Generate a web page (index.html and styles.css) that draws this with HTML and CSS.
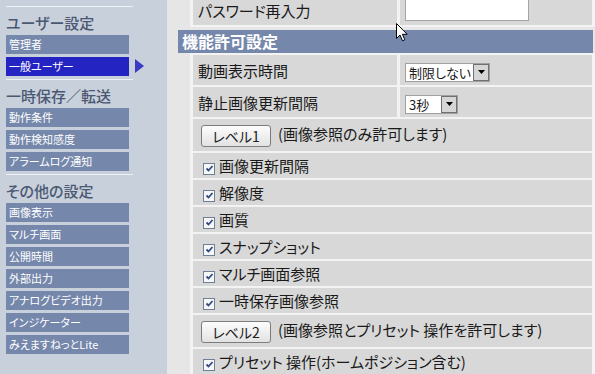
FILE: index.html
```html
<!DOCTYPE html>
<html lang="ja">
<head>
<meta charset="utf-8">
<title>機能許可設定</title>
<link rel="stylesheet" href="styles.css">
</head>
<body>
<div class="page">
  <nav class="sidebar">
    <section class="group">
      <h2 class="group-title">ユーザー設定</h2>
      <ul class="menu">
        <li class="menu-item">管理者</li>
        <li class="menu-item is-current">一般ユーザー</li>
      </ul>
    </section>
    <section class="group">
      <h2 class="group-title">一時保存／転送</h2>
      <ul class="menu">
        <li class="menu-item">動作条件</li>
        <li class="menu-item">動作検知感度</li>
        <li class="menu-item">アラームログ通知</li>
      </ul>
    </section>
    <section class="group">
      <h2 class="group-title">その他の設定</h2>
      <ul class="menu">
        <li class="menu-item">画像表示</li>
        <li class="menu-item">マルチ画面</li>
        <li class="menu-item">公開時間</li>
        <li class="menu-item">外部出力</li>
        <li class="menu-item">アナログビデオ出力</li>
        <li class="menu-item">インジケーター</li>
        <li class="menu-item">みえますねっとLite</li>
      </ul>
    </section>
  </nav>

  <main class="content">
    <table class="form form-top">
      <tr class="row-select">
        <th class="label">パスワード再入力</th>
        <td class="value"><span class="textbox"></span></td>
      </tr>
    </table>

    <h3 class="section-head">機能許可設定</h3>

    <table class="form">
      <tr class="row-select">
        <th class="label">動画表示時間</th>
        <td class="value">
          <span class="select"><span class="select-text select-text-wide">制限しない</span><span class="select-btn"><svg width="7" height="4" viewBox="0 0 7 4"><path d="M0 0H7L3.5 4Z" fill="#000"/></svg></span></span>
        </td>
      </tr>
      <tr class="row-select">
        <th class="label">静止画像更新間隔</th>
        <td class="value">
          <span class="select"><span class="select-text select-text-narrow">3秒</span><span class="select-btn"><svg width="7" height="4" viewBox="0 0 7 4"><path d="M0 0H7L3.5 4Z" fill="#000"/></svg></span></span>
        </td>
      </tr>
      <tr class="row-button">
        <td class="wide" colspan="2"><span class="level-btn">レベル1</span>(画像参照のみ許可します)</td>
      </tr>
      <tr class="row-check">
        <td class="wide check-cell" colspan="2"><span class="check"><svg width="9" height="9" viewBox="0 0 9 9"><path d="M1.5 4.5L3.5 6.5L7.5 2" fill="none" stroke="#2c4a86" stroke-width="1.8"/></svg></span>画像更新間隔</td>
      </tr>
      <tr class="row-check">
        <td class="wide check-cell" colspan="2"><span class="check"><svg width="9" height="9" viewBox="0 0 9 9"><path d="M1.5 4.5L3.5 6.5L7.5 2" fill="none" stroke="#2c4a86" stroke-width="1.8"/></svg></span>解像度</td>
      </tr>
      <tr class="row-check">
        <td class="wide check-cell" colspan="2"><span class="check"><svg width="9" height="9" viewBox="0 0 9 9"><path d="M1.5 4.5L3.5 6.5L7.5 2" fill="none" stroke="#2c4a86" stroke-width="1.8"/></svg></span>画質</td>
      </tr>
      <tr class="row-check">
        <td class="wide check-cell" colspan="2"><span class="check"><svg width="9" height="9" viewBox="0 0 9 9"><path d="M1.5 4.5L3.5 6.5L7.5 2" fill="none" stroke="#2c4a86" stroke-width="1.8"/></svg></span>スナップショット</td>
      </tr>
      <tr class="row-check">
        <td class="wide check-cell" colspan="2"><span class="check"><svg width="9" height="9" viewBox="0 0 9 9"><path d="M1.5 4.5L3.5 6.5L7.5 2" fill="none" stroke="#2c4a86" stroke-width="1.8"/></svg></span>マルチ画面参照</td>
      </tr>
      <tr class="row-check">
        <td class="wide check-cell" colspan="2"><span class="check"><svg width="9" height="9" viewBox="0 0 9 9"><path d="M1.5 4.5L3.5 6.5L7.5 2" fill="none" stroke="#2c4a86" stroke-width="1.8"/></svg></span>一時保存画像参照</td>
      </tr>
      <tr class="row-button">
        <td class="wide" colspan="2"><span class="level-btn">レベル2</span>(画像参照とプリセット 操作を許可します)</td>
      </tr>
      <tr class="row-check">
        <td class="wide check-cell" colspan="2"><span class="check"><svg width="9" height="9" viewBox="0 0 9 9"><path d="M1.5 4.5L3.5 6.5L7.5 2" fill="none" stroke="#2c4a86" stroke-width="1.8"/></svg></span>プリセット 操作(ホームポジション含む)</td>
      </tr>
    </table>
  </main>

  <svg class="cursor" width="12" height="19" viewBox="0 0 12 19"><path d="M0.5 0.5V15.5L4 12L6.5 17.8L8.8 16.8L6.4 11.3H11.2Z" fill="#fff" stroke="#000" stroke-width="1" stroke-linejoin="round"/></svg>
</div>
</body>
</html>
```

FILE: styles.css
```css
* { box-sizing: border-box; }

html, body {
  margin: 0;
  padding: 0;
}

body {
  font-family: "Noto Sans CJK JP", "Noto Sans", sans-serif;
  font-feature-settings: "palt";
  color: #1a1a1a;
  background: #e6e6e6;
}

.page {
  position: relative;
  display: flex;
  width: 595px;
  height: 374px;
  overflow: hidden;
}

/* ---------- sidebar ---------- */
.sidebar {
  flex: 0 0 167px;
  background: #c8d0dc;
  padding: 6px 0 0 6px;
}

.group {
  width: 127px;
  border-top: 1px solid #eef1f5;
  margin-bottom: 3px;
}

.group-title {
  margin: 0;
  height: 28px;
  padding-top: 4px;
  line-height: 24px;
  font-size: 15px;
  font-weight: 500;
  color: #4b5872;
  white-space: nowrap;
}

.menu {
  list-style: none;
  margin: 0;
  padding: 0;
}

.menu-item {
  position: relative;
  width: 123px;
  height: 19px;
  line-height: 19px;
  margin-bottom: 3px;
  padding-left: 3px;
  background: #7587ab;
  color: #fff;
  font-size: 11px;
  white-space: nowrap;
}

.menu-item.is-current {
  background: #2424c2;
}

.menu-item.is-current::after {
  content: "";
  position: absolute;
  top: 2px;
  right: -15px;
  border-left: 9px solid #3a3ac6;
  border-top: 7px solid transparent;
  border-bottom: 7px solid transparent;
}

/* ---------- content ---------- */
.content {
  flex: 1 1 auto;
  padding-left: 11px;
  background: #e6e6e6;
}

.form {
  margin-left: 12px;
  width: calc(100% - 12px);
  border-collapse: separate;
  border-spacing: 3px 2px;
  background: #f3f3f3;
  font-size: 15px;
}

.form-top {
  margin-top: -7px;
}

.form th,
.form td {
  background: #d8d8d8;
  padding: 0;
  vertical-align: middle;
  text-align: left;
  font-weight: normal;
  white-space: nowrap;
}

.label {
  width: 204px;
  padding-left: 5px !important;
}

.value {
  padding-left: 5px !important;
}

.wide {
  padding-left: 8px !important;
}

.check-cell {
  padding-left: 10px !important;
}

.row-select > * { height: 30px; }
.row-button > * { height: 32px; }
.row-check > * { height: 25px; }

.section-head {
  margin: 3px 2px 0 0;
  height: 23px;
  line-height: 23px;
  padding-left: 4px;
  background: #7587ab;
  color: #fff;
  font-size: 16px;
  font-weight: bold;
}

/* text box */
.textbox {
  display: block;
  width: 124px;
  height: 22px;
  background: #fff;
  border: 1px solid #a4a4a4;
}

/* select */
.select {
  display: inline-flex;
  height: 19px;
  background: #fff;
  border: 1px solid #a0a0a0;
  vertical-align: middle;
  margin-top: 3px;
}

.select-text {
  padding-left: 3px;
  font-size: 13px;
  line-height: 17px;
  overflow: hidden;
}

.select-text-wide { width: 67px; }
.select-text-narrow { width: 35px; }

.select-btn {
  width: 16px;
  display: flex;
  align-items: center;
  justify-content: center;
  background: #d6d6d6;
  border: 1px solid #707070;
}

/* level button */
.level-btn {
  display: inline-block;
  width: 70px;
  height: 22px;
  line-height: 20px;
  margin-right: 7px;
  margin-top: 2px;
  border: 1px solid #7c7c7c;
  border-radius: 3px;
  background: linear-gradient(#fdfdfd, #e2e2e2);
  text-align: center;
  font-size: 14px;
  color: #222;
  vertical-align: middle;
}

/* checkbox */
.check {
  display: inline-flex;
  align-items: center;
  justify-content: center;
  width: 12px;
  height: 12px;
  margin-right: 4px;
  border: 1px solid #6f7f96;
  background: #f7f7f7;
  vertical-align: -1px;
}

/* mouse pointer captured in the screenshot */
.cursor {
  position: absolute;
  left: 396px;
  top: 23px;
}
```
